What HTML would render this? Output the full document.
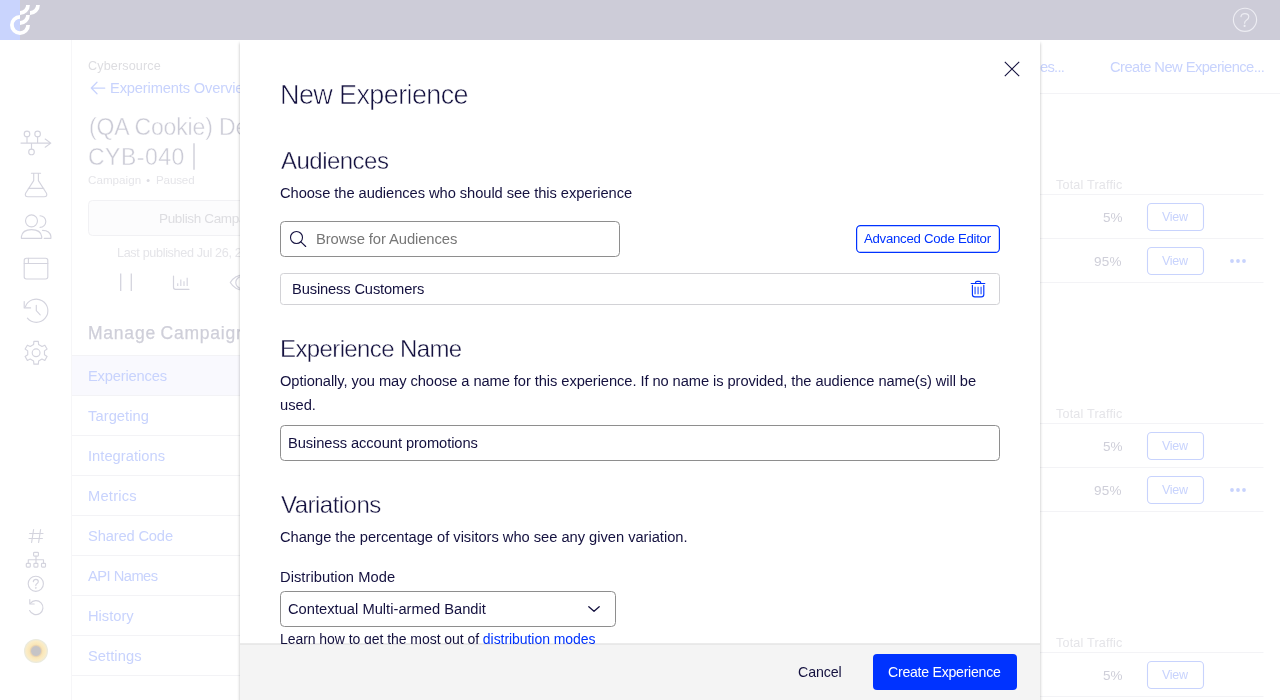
<!DOCTYPE html>
<html lang="en"><head><meta charset="utf-8"><title>New Experience</title>
<style>
*{box-sizing:border-box}
html,body{margin:0;padding:0}
body{width:1280px;height:700px;overflow:hidden;background:#fff;position:relative;font-family:"Liberation Sans",sans-serif}
.t{position:absolute;white-space:nowrap;font-family:"Liberation Sans",sans-serif;z-index:1;will-change:transform}
.t.z2{z-index:12}
.t.z3{z-index:16}
.thin{-webkit-text-stroke:0.6px #fff}
.thin2{-webkit-text-stroke:0.4px #fff}
.med{-webkit-text-stroke:0.25px #cfcfd9;word-spacing:-1px}
svg{position:absolute;left:0;top:0;overflow:visible}
#bgsvg{z-index:0}
#top{position:absolute;left:0;top:0;width:1280px;height:40px;background:#cdccd8;z-index:20}
#top .strip{position:absolute;left:0;top:0;width:20px;height:40px;background:#c9d4fd}
#modal{position:absolute;left:240px;top:40px;width:800px;height:660px;background:#fff;z-index:10;box-shadow:0 3px 3px rgba(0,0,0,.27)}
#msvg{z-index:11}
#foot{position:absolute;left:240px;top:643px;width:800px;height:57px;background:#f4f4f4;background-clip:padding-box;border-top:1px solid rgba(0,0,0,.08);box-shadow:inset 0 1px 0 #e8e8e8;z-index:14}
#create{position:absolute;left:873px;top:654px;width:144px;height:36px;border-radius:4px;background:#0033ff;z-index:15}
#avatar{position:absolute;left:24.1px;top:638.8px;width:24px;height:24px;border-radius:50%;z-index:1;
 background:radial-gradient(circle closest-side, #c6c4c6 0, #c6c4c6 37%, #ead3b0 46%, #f9e6b8 56%, #fbecc6 80%, #f0ebd6 92%, #e7e9e0 100%)}
</style></head>
<body>
<div id="top"><div class="strip"></div><svg width="1280" height="40" viewBox="0 0 1280 40" style="z-index:21"><g fill="none" stroke="#fff" stroke-width="3.8"><path d="M20 16.9A8.1 8.1 0 1 0 28.1 25"/><path d="M28 5A8 8 0 0 1 20 13"/><path d="M38 5A8 8 0 0 1 30 13"/><path d="M28 15A8 8 0 0 1 20 23"/></g><g fill="none" stroke="#ededf3" stroke-width="1.15" stroke-linecap="round" stroke-linejoin="round"><circle cx="1245" cy="19.8" r="11.6"/><path d="M1241 16.6Q1241.3 13.6 1244.9 13.6Q1248.8 13.6 1248.8 16.8Q1248.8 18.8 1246.4 20.2Q1244.6 21.3 1244.6 23.2"/><circle cx="1244.6" cy="25.9" r="0.5"/></g></svg></div>
<svg id="bgsvg" width="1280" height="700" viewBox="0 0 1280 700"><line x1="71.5" y1="40" x2="71.5" y2="700" stroke="#f6f6f8"/><rect x="72" y="356" width="170" height="40" fill="#f9f9fe"/><line x1="72" y1="355.5" x2="242" y2="355.5" stroke="#f3f3f6"/><line x1="72" y1="395.5" x2="242" y2="395.5" stroke="#f3f3f6"/><line x1="72" y1="435.5" x2="242" y2="435.5" stroke="#f3f3f6"/><line x1="72" y1="475.5" x2="242" y2="475.5" stroke="#f3f3f6"/><line x1="72" y1="515.5" x2="242" y2="515.5" stroke="#f3f3f6"/><line x1="72" y1="555.5" x2="242" y2="555.5" stroke="#f3f3f6"/><line x1="72" y1="595.5" x2="242" y2="595.5" stroke="#f3f3f6"/><line x1="72" y1="635.5" x2="242" y2="635.5" stroke="#f3f3f6"/><line x1="72" y1="675.5" x2="242" y2="675.5" stroke="#f3f3f6"/><rect x="88.5" y="200.5" width="230" height="35" rx="4" fill="#fcfcfd" stroke="#f1f1f4"/><path d="M194 143.2V169.8" stroke="#cfcfd9" stroke-width="1.4" fill="none"/><circle cx="148.1" cy="180.6" r="1.5" fill="#dddde3"/><path d="M104.8 88H91.4M97 82.2 91.3 88 97 93.8" fill="none" stroke="#c8d3fd" stroke-width="1.25" stroke-linecap="round" stroke-linejoin="round"/><path d="M120.7 273.6V291M131.3 273.6V291" fill="none" stroke="#d4d4de" stroke-width="1.3"/><path d="M173.5 276V287.3Q173.5 289.3 175.5 289.3H189" fill="none" stroke="#d4d4de" stroke-width="1.2" stroke-linecap="round"/><path d="M177.7 283.2V286M180.8 279.4V286M184 281.2V286M187.2 277.8V286" fill="none" stroke="#dadae3" stroke-width="1.3"/><path d="M230.3 282.5C233 278 238 274.8 244 274.8C250 274.8 255 278 257.7 282.5C255 287 250 290.2 244 290.2C238 290.2 233 287 230.3 282.5Z" fill="none" stroke="#d4d4de" stroke-width="1.2"/><circle cx="241.8" cy="282.5" r="6" fill="none" stroke="#d4d4de" stroke-width="1.2"/><g fill="none" stroke="#d4d4de" stroke-width="1.15" stroke-linecap="round" stroke-linejoin="round"><path d="M21 143.1H50.6M45.2 139 50.8 143.1 45.2 147.2M27 136.7V143M37.6 136.7V143M31.5 143.2V149"/><circle cx="27" cy="133.9" r="2.8"/><circle cx="37.6" cy="133.9" r="2.8"/><circle cx="31.5" cy="151.9" r="2.8"/></g><g fill="none" stroke="#d4d4de" stroke-width="1.15" stroke-linecap="round" stroke-linejoin="round"><path d="M31.4 173.2H40.6M33.7 173.4V180.6L25.6 193.3Q24.4 196.7 28 196.7H44.1Q47.7 196.7 46.5 193.3L38.4 180.6V173.4M28.3 188.4H43.8"/></g><g fill="none" stroke="#d4d4de" stroke-width="1.15" stroke-linecap="round" stroke-linejoin="round"><circle cx="31.5" cy="220.8" r="6"/><path d="M21.4 238.3V236.6Q22.4 229.6 31.5 229.6Q40.7 229.6 41.7 236.6V238.3Z"/><path d="M40 215.7A5.6 5.6 0 1 1 40 227.3"/><path d="M42.6 230.4Q50 230.4 50.9 236.6V238.3H44.2"/></g><g fill="none" stroke="#d4d4de" stroke-width="1.15" stroke-linecap="round" stroke-linejoin="round"><rect x="24.2" y="258.2" width="23.6" height="20.8" rx="2.2"/><path d="M24.2 263.5H47.8M28.4 258.2V263.5"/></g><g fill="none" stroke="#d4d4de" stroke-width="1.15" stroke-linecap="round" stroke-linejoin="round"><path d="M25.4 306.7A11.6 11.6 0 1 1 27.4 318.2"/><path d="M24.2 301.6V307.9H30.6"/><path d="M36.3 305.3V310.7L40.2 314.8"/></g><g fill="none" stroke="#d4d4de" stroke-width="1.15" stroke-linecap="round" stroke-linejoin="round"><path d="M33.59 344.58L33.89 341.41L38.31 341.41L38.61 344.58L41.97 346.51L44.85 345.19L47.07 349.02L44.48 350.87L44.48 354.73L47.07 356.58L44.85 360.41L41.97 359.09L38.61 361.02L38.31 364.19L33.89 364.19L33.59 361.02L30.23 359.09L27.35 360.41L25.13 356.58L27.72 354.73L27.72 350.87L25.13 349.02L27.35 345.19L30.23 346.51Z"/><circle cx="36.1" cy="352.8" r="3.9"/></g><g fill="none" stroke="#d4d4de" stroke-width="1.15" stroke-linecap="round" stroke-linejoin="round"><path d="M33.6 529.5 31.6 542.5M40.6 529.5 38.6 542.5M29.6 533.5H43M29 538.5H42.4"/></g><g fill="none" stroke="#d4d4de" stroke-width="1.15" stroke-linecap="round" stroke-linejoin="round"><rect x="33.6" y="552.3" width="4.8" height="3.8" rx="0.8"/><rect x="26.3" y="563.3" width="4" height="3.8" rx="0.8"/><rect x="33.9" y="563.3" width="4" height="3.8" rx="0.8"/><rect x="41.5" y="563.3" width="4" height="3.8" rx="0.8"/><path d="M36 556.2V563.2M28.3 563.2V559.7H43.5V563.2"/></g><g fill="none" stroke="#d4d4de" stroke-width="1.15" stroke-linecap="round" stroke-linejoin="round"><circle cx="35.8" cy="583.8" r="7.6"/><path d="M33.3 581.6Q33.5 579.4 35.9 579.4Q38.3 579.4 38.3 581.5Q38.3 583 36.8 583.8Q35.8 584.4 35.8 585.6"/><circle cx="35.8" cy="587.8" r="0.35"/></g><g fill="none" stroke="#d4d4de" stroke-width="1.15" stroke-linecap="round" stroke-linejoin="round"><path d="M30.4 603.4A7 7 0 1 1 29.6 610.6"/><path d="M29.8 599.6V604H34.2"/></g><line x1="1040" y1="93.5" x2="1280" y2="93.5" stroke="#f3f3f6"/><line x1="1040" y1="194.5" x2="1263.5" y2="194.5" stroke="#f3f3f6"/><line x1="1040" y1="238.5" x2="1263.5" y2="238.5" stroke="#f3f3f6"/><line x1="1040" y1="282.5" x2="1263.5" y2="282.5" stroke="#f3f3f6"/><rect x="1147.5" y="203.5" width="56" height="27" rx="4" fill="#fff" stroke="#c8d3fd" stroke-width="1.1"/><rect x="1147.5" y="247.5" width="56" height="27" rx="4" fill="#fff" stroke="#c8d3fd" stroke-width="1.1"/><circle cx="1232" cy="261" r="1.9" fill="#c8d3fd"/><circle cx="1238" cy="261" r="1.9" fill="#c8d3fd"/><circle cx="1244" cy="261" r="1.9" fill="#c8d3fd"/><line x1="1040" y1="423.5" x2="1263.5" y2="423.5" stroke="#f3f3f6"/><line x1="1040" y1="467.5" x2="1263.5" y2="467.5" stroke="#f3f3f6"/><line x1="1040" y1="511.5" x2="1263.5" y2="511.5" stroke="#f3f3f6"/><rect x="1147.5" y="432.5" width="56" height="27" rx="4" fill="#fff" stroke="#c8d3fd" stroke-width="1.1"/><rect x="1147.5" y="476.5" width="56" height="27" rx="4" fill="#fff" stroke="#c8d3fd" stroke-width="1.1"/><circle cx="1232" cy="490" r="1.9" fill="#c8d3fd"/><circle cx="1238" cy="490" r="1.9" fill="#c8d3fd"/><circle cx="1244" cy="490" r="1.9" fill="#c8d3fd"/><line x1="1040" y1="652.5" x2="1263.5" y2="652.5" stroke="#f3f3f6"/><line x1="1040" y1="696.5" x2="1263.5" y2="696.5" stroke="#f3f3f6"/><line x1="1040" y1="740.5" x2="1263.5" y2="740.5" stroke="#f3f3f6"/><rect x="1147.5" y="661.5" width="56" height="27" rx="4" fill="#fff" stroke="#c8d3fd" stroke-width="1.1"/><rect x="1147.5" y="705.5" width="56" height="27" rx="4" fill="#fff" stroke="#c8d3fd" stroke-width="1.1"/><circle cx="1232" cy="719" r="1.9" fill="#c8d3fd"/><circle cx="1238" cy="719" r="1.9" fill="#c8d3fd"/><circle cx="1244" cy="719" r="1.9" fill="#c8d3fd"/></svg>
<div id="avatar"></div>
<div id="modal"></div>
<svg id="msvg" width="1280" height="700" viewBox="0 0 1280 700"><path d="M1004.8 61.8 1019.2 76.2M1019.2 61.8 1004.8 76.2" fill="none" stroke="#14113f" stroke-width="1.1"/><rect x="280.5" y="221.5" width="339" height="35" rx="4" fill="#fff" stroke="#8e8e8e"/><circle cx="296.5" cy="237.5" r="6" fill="none" stroke="#14113f" stroke-width="1.1"/><path d="M300.9 241.9 305.7 246.5" stroke="#14113f" stroke-width="1.1" stroke-linecap="round"/><rect x="856.6" y="225.6" width="142.8" height="26.8" rx="4" fill="#fff" stroke="#0033ff" stroke-width="1.2"/><rect x="280.5" y="273.5" width="719" height="31" rx="3" fill="#fff" stroke="#d2d2d6"/><g fill="none" stroke="#0033ff" stroke-width="1.15" stroke-linecap="round" stroke-linejoin="round"><path d="M971.2 283.5H984.8M975.5 283.3V282.8Q975.5 281.3 977 281.3H979.2Q980.7 281.3 980.7 282.8V283.3"/><path d="M972.4 285.3V294.4Q972.4 296.8 974.8 296.8H981.4Q983.8 296.8 983.8 294.4V285.3"/></g><path d="M975.1 286.8V294.2M978.1 286.8V294.2M981.1 286.8V294.2" stroke="#5b7cff" stroke-width="1.5" fill="none"/><rect x="280.5" y="425.5" width="719" height="35" rx="4" fill="#fff" stroke="#8e8e8e"/><rect x="280.5" y="591.5" width="335" height="35" rx="4" fill="#fff" stroke="#8e8e8e"/><path d="M588.8 606.8 594 611.3 599.2 606.8" fill="none" stroke="#14113f" stroke-width="1.3" stroke-linecap="round" stroke-linejoin="round"/></svg>
<div id="foot"></div>
<div id="create"></div>
<span class="t thin z2" style="left:280.00px;top:79.00px;font-size:27px;line-height:33px;font-weight:400;letter-spacing:-0.615px;color:#14113f">New Experience</span>
<span class="t thin2 z2" style="left:281.20px;top:146.00px;font-size:24px;line-height:30px;font-weight:400;letter-spacing:-0.525px;color:#14113f">Audiences</span>
<span class="t z2" style="left:280.00px;top:183.00px;font-size:14.7px;line-height:21px;font-weight:400;letter-spacing:-0.060px;color:#14113f">Choose the audiences who should see this experience</span>
<span class="t z2" style="left:316.40px;top:229.00px;font-size:14.8px;line-height:21px;font-weight:400;letter-spacing:-0.095px;color:#767676">Browse for Audiences</span>
<span class="t z2" style="left:864.30px;top:229.00px;font-size:13.2px;line-height:19px;font-weight:400;letter-spacing:-0.258px;color:#0033ff">Advanced Code Editor</span>
<span class="t z2" style="left:291.60px;top:279.00px;font-size:14.7px;line-height:21px;font-weight:400;letter-spacing:-0.141px;color:#14113f">Business Customers</span>
<span class="t thin2 z2" style="left:280.20px;top:334.00px;font-size:24px;line-height:30px;font-weight:400;letter-spacing:-0.614px;color:#14113f">Experience Name</span>
<span class="t z2" style="left:280.00px;top:371.00px;font-size:14.7px;line-height:21px;font-weight:400;letter-spacing:-0.077px;color:#14113f">Optionally, you may choose a name for this experience. If no name is provided, the audience name(s) will be</span>
<span class="t z2" style="left:280.00px;top:395.00px;font-size:14.7px;line-height:21px;font-weight:400;letter-spacing:0.000px;color:#14113f">used.</span>
<span class="t z2" style="left:288.00px;top:433.00px;font-size:14.7px;line-height:21px;font-weight:400;letter-spacing:-0.077px;color:#14113f">Business account promotions</span>
<span class="t thin2 z2" style="left:280.90px;top:490.00px;font-size:24px;line-height:30px;font-weight:400;letter-spacing:-0.522px;color:#14113f">Variations</span>
<span class="t z2" style="left:280.00px;top:527.00px;font-size:14.7px;line-height:21px;font-weight:400;letter-spacing:-0.025px;color:#14113f">Change the percentage of visitors who see any given variation.</span>
<span class="t z2" style="left:280.20px;top:567.00px;font-size:14.7px;line-height:21px;font-weight:400;letter-spacing:0.050px;color:#14113f">Distribution Mode</span>
<span class="t z2" style="left:287.70px;top:599.00px;font-size:14.7px;line-height:21px;font-weight:400;letter-spacing:0.011px;color:#14113f">Contextual Multi-armed Bandit</span>
<span class="t z2" style="left:280.00px;top:629.00px;font-size:14.0px;line-height:20px;font-weight:400;letter-spacing:-0.056px;color:#14113f">Learn how to get the most out of <span style="color:#0033ff">distribution modes</span></span>
<span class="t z3" style="left:797.90px;top:662.00px;font-size:14.2px;line-height:20px;font-weight:400;letter-spacing:-0.100px;color:#14113f">Cancel</span>
<span class="t z3" style="left:888.10px;top:662.00px;font-size:14.1px;line-height:20px;font-weight:400;letter-spacing:-0.244px;color:#ffffff">Create Experience</span>
<span class="t" style="left:87.90px;top:57.00px;font-size:12.6px;line-height:19px;font-weight:400;letter-spacing:0.130px;color:#dddde1">Cybersource</span>
<span class="t" style="left:110.00px;top:78.00px;font-size:14.7px;line-height:21px;font-weight:400;letter-spacing:-0.158px;color:#c8d3fd">Experiments Overview</span>
<span class="t thin2" style="left:89.00px;top:113.00px;font-size:23px;line-height:29px;font-weight:400;letter-spacing:-0.142px;color:#cbcbd6">(QA Cookie) Demo Campaign</span>
<span class="t thin2" style="left:88.00px;top:143.00px;font-size:23px;line-height:29px;font-weight:400;letter-spacing:0.483px;color:#cbcbd6">CYB-040</span>
<span class="t" style="left:87.70px;top:171.00px;font-size:11.6px;line-height:18px;font-weight:400;letter-spacing:0.043px;color:#e5e5e9">Campaign</span>
<span class="t" style="left:155.90px;top:171.00px;font-size:11.6px;line-height:18px;font-weight:400;letter-spacing:-0.140px;color:#e5e5e9">Paused</span>
<span class="t" style="left:159.20px;top:208.70px;font-size:13.5px;line-height:20px;font-weight:400;letter-spacing:-0.345px;color:#dddde1">Publish Campaign</span>
<span class="t" style="left:116.60px;top:243.70px;font-size:12.6px;line-height:19px;font-weight:400;letter-spacing:-0.329px;color:#e5e5e9">Last published Jul 26, 2023</span>
<span class="t med" style="left:87.80px;top:320.50px;font-size:17.5px;line-height:24px;font-weight:400;letter-spacing:0.777px;color:#cfcfd9">Manage Campaign</span>
<span class="t" style="left:87.80px;top:366.00px;font-size:14.7px;line-height:21px;font-weight:400;letter-spacing:-0.180px;color:#c8d3fd">Experiences</span>
<span class="t" style="left:88.40px;top:406.00px;font-size:14.7px;line-height:21px;font-weight:400;letter-spacing:0.075px;color:#c8d3fd">Targeting</span>
<span class="t" style="left:87.80px;top:446.00px;font-size:14.7px;line-height:21px;font-weight:400;letter-spacing:0.027px;color:#c8d3fd">Integrations</span>
<span class="t" style="left:87.80px;top:486.00px;font-size:14.7px;line-height:21px;font-weight:400;letter-spacing:0.217px;color:#c8d3fd">Metrics</span>
<span class="t" style="left:87.80px;top:526.00px;font-size:14.7px;line-height:21px;font-weight:400;letter-spacing:-0.150px;color:#c8d3fd">Shared Code</span>
<span class="t" style="left:88.40px;top:566.00px;font-size:14.7px;line-height:21px;font-weight:400;letter-spacing:-0.525px;color:#c8d3fd">API Names</span>
<span class="t" style="left:87.80px;top:606.00px;font-size:14.7px;line-height:21px;font-weight:400;letter-spacing:0.000px;color:#c8d3fd">History</span>
<span class="t" style="left:87.80px;top:646.00px;font-size:14.7px;line-height:21px;font-weight:400;letter-spacing:0.057px;color:#c8d3fd">Settings</span>
<span class="t" style="left:1109.60px;top:56.60px;font-size:14.7px;line-height:21px;font-weight:400;letter-spacing:-0.543px;color:#c8d3fd">Create New Experience...</span>
<span class="t" style="left:1040.20px;top:56.60px;font-size:14.7px;line-height:21px;font-weight:400;letter-spacing:-0.725px;color:#c8d3fd">es...</span>
<span class="t" style="left:1055.90px;top:175.60px;font-size:12.6px;line-height:19px;font-weight:400;letter-spacing:0.183px;color:#e5e5e9">Total Traffic</span>
<span class="t" style="left:1055.90px;top:404.60px;font-size:12.6px;line-height:19px;font-weight:400;letter-spacing:0.183px;color:#e5e5e9">Total Traffic</span>
<span class="t" style="left:1055.90px;top:633.60px;font-size:12.6px;line-height:19px;font-weight:400;letter-spacing:0.183px;color:#e5e5e9">Total Traffic</span>
<span class="t" style="left:1102.90px;top:207.80px;font-size:13.5px;line-height:20px;font-weight:400;letter-spacing:-0.100px;color:#cfcfd9">5%</span>
<span class="t" style="left:1094.20px;top:251.80px;font-size:13.5px;line-height:20px;font-weight:400;letter-spacing:0.300px;color:#cfcfd9">95%</span>
<span class="t" style="left:1102.90px;top:436.80px;font-size:13.5px;line-height:20px;font-weight:400;letter-spacing:-0.100px;color:#cfcfd9">5%</span>
<span class="t" style="left:1094.20px;top:480.80px;font-size:13.5px;line-height:20px;font-weight:400;letter-spacing:0.300px;color:#cfcfd9">95%</span>
<span class="t" style="left:1102.90px;top:665.80px;font-size:13.5px;line-height:20px;font-weight:400;letter-spacing:-0.100px;color:#cfcfd9">5%</span>
<span class="t" style="left:1162.40px;top:208.30px;font-size:12.5px;line-height:18px;font-weight:400;letter-spacing:-0.267px;color:#c8d3fd">View</span>
<span class="t" style="left:1162.40px;top:252.30px;font-size:12.5px;line-height:18px;font-weight:400;letter-spacing:-0.267px;color:#c8d3fd">View</span>
<span class="t" style="left:1162.40px;top:437.30px;font-size:12.5px;line-height:18px;font-weight:400;letter-spacing:-0.267px;color:#c8d3fd">View</span>
<span class="t" style="left:1162.40px;top:481.30px;font-size:12.5px;line-height:18px;font-weight:400;letter-spacing:-0.267px;color:#c8d3fd">View</span>
<span class="t" style="left:1162.40px;top:666.30px;font-size:12.5px;line-height:18px;font-weight:400;letter-spacing:-0.267px;color:#c8d3fd">View</span>
</body></html>
